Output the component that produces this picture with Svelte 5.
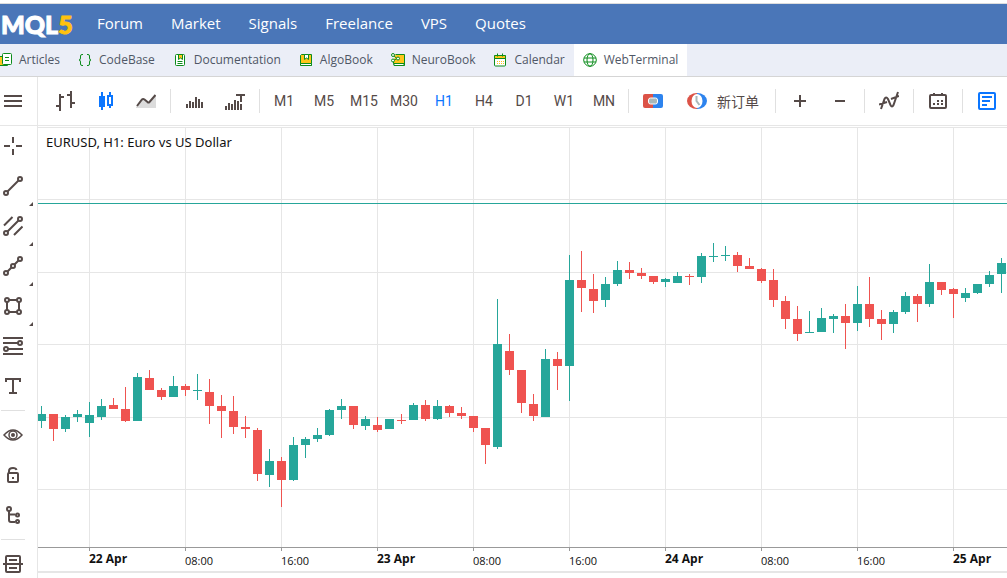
<script>
  const menu = ["Forum", "Market", "Signals", "Freelance", "VPS", "Quotes"];

  const sections = [
    { name: "Articles", icon: "articles" },
    { name: "CodeBase", icon: "code" },
    { name: "Documentation", icon: "docs" },
    { name: "AlgoBook", icon: "algo" },
    { name: "NeuroBook", icon: "neuro" },
    { name: "Calendar", icon: "calendar" },
    { name: "WebTerminal", icon: "globe" },
  ];

  const periods = ["M1", "M5", "M15", "M30", "H1", "H4", "D1", "W1", "MN"];
  let period = $state("H1");
  let section = $state("WebTerminal");

  const tools = [
    { name: "Crosshair", icon: "cross" },
    { name: "Trend line", icon: "line", more: true },
    { name: "Channel", icon: "channel", more: true },
    { name: "Polyline", icon: "poly", more: true },
    { name: "Shapes", icon: "shape", more: true },
    { name: "Fibonacci", icon: "fibo" },
    { name: "Text", icon: "text" },
    null,
    { name: "Show objects", icon: "eye" },
    { name: "Lock", icon: "lock" },
    { name: "Object tree", icon: "tree" },
    null,
    { name: "Panels", icon: "panels" },
  ];

  // chart geometry, all in px from the top left of the chart area
  const step = 12;
  const top = 126;
  const axisY = 421;
  const gridRows = [73, 146, 218, 291, 363];
  const priceY = 77;

  // high, body top, body bottom, low, up
  const candles = [
    [406, 414, 421, 428, 1], [414, 414, 429, 441, 0], [415, 417, 429, 432, 1],
    [410, 414, 417, 422, 1], [402, 415, 423, 437, 1], [399, 406, 417, 420, 1],
    [398, 405, 409, 409, 0], [387, 409, 421, 422, 0], [373, 377, 421, 421, 1],
    [370, 378, 390, 390, 0], [388, 390, 397, 400, 0], [376, 386, 397, 397, 1],
    [384, 386, 390, 396, 0], [374, 390, 391, 400, 1], [379, 392, 406, 424, 0],
    [395, 406, 411, 438, 0], [396, 411, 427, 434, 0], [416, 427, 429, 438, 0],
    [428, 430, 474, 481, 0], [449, 461, 475, 487, 1], [457, 461, 480, 507, 0],
    [437, 445, 480, 481, 1], [437, 439, 445, 458, 1], [428, 435, 439, 442, 1],
    [409, 410, 435, 436, 1], [399, 406, 410, 419, 1], [406, 406, 425, 429, 0],
    [416, 419, 426, 430, 1], [417, 425, 430, 432, 0], [419, 419, 429, 429, 1],
    [414, 420, 421, 424, 0], [403, 405, 420, 420, 1], [400, 405, 419, 421, 0],
    [400, 406, 419, 420, 1], [405, 406, 413, 417, 0], [407, 413, 416, 419, 0],
    [416, 416, 428, 432, 0], [428, 428, 445, 464, 0], [299, 344, 447, 449, 1],
    [334, 351, 370, 375, 0], [370, 370, 403, 413, 0], [394, 404, 416, 421, 0],
    [349, 359, 417, 417, 1], [352, 359, 366, 390, 0], [255, 280, 366, 401, 1],
    [251, 280, 288, 312, 0], [274, 289, 301, 313, 0], [277, 284, 300, 307, 1],
    [261, 270, 284, 286, 1], [262, 270, 273, 279, 0], [268, 273, 276, 279, 0],
    [276, 276, 282, 284, 0], [278, 279, 282, 287, 1], [272, 276, 283, 283, 1],
    [274, 276, 277, 285, 0], [253, 256, 277, 283, 1], [243, 256, 257, 262, 1],
    [246, 255, 256, 261, 1], [252, 255, 266, 272, 0], [258, 266, 269, 269, 0],
    [268, 269, 281, 283, 0], [269, 280, 300, 307, 0], [296, 301, 319, 329, 0],
    [306, 319, 334, 341, 0], [311, 332, 333, 333, 1], [308, 318, 332, 332, 1],
    [314, 316, 319, 333, 1], [304, 316, 323, 349, 0], [286, 304, 323, 331, 1],
    [277, 304, 319, 327, 0], [310, 319, 324, 340, 0], [310, 312, 324, 333, 1],
    [292, 296, 312, 314, 1], [294, 296, 304, 322, 0], [264, 282, 304, 307, 1],
    [282, 282, 290, 295, 0], [288, 289, 294, 318, 0], [288, 293, 298, 302, 1],
    [284, 284, 293, 294, 1], [271, 275, 284, 287, 1], [258, 263, 274, 293, 1],
  ];

  const labels = [
    "22 Apr", "08:00", "16:00",
    "23 Apr", "08:00", "16:00",
    "24 Apr", "08:00", "16:00",
    "25 Apr",
  ];

  const candleX = (i) => 3 + i * step;
  const labelX = (i) => 51 + i * step * 8;
</script>

{#snippet sectionIcon(icon)}
  <svg width="14" height="14" viewBox="0 0 14 14" fill="none" stroke="#0c8c1c" aria-hidden="true">
    {#if icon === "articles"}
      <path d="M4 3.5H1.500V12.500H9.500V11" fill="#ffc61a" stroke="#0c8c1c" />
      <rect x="4.500" y="0.500" width="9" height="11" rx="1" fill="#fff" />
      <path d="M7 4.500h4M7 7.500h4" />
    {:else if icon === "code"}
      <path d="M5 1.500H4Q2.500 1.500 2.500 3V5Q2.500 7 1 7Q2.500 7 2.500 9V11Q2.500 12.500 4 12.500H5M9 1.500h1Q11.500 1.500 11.500 3V5Q11.500 7 13 7Q11.500 7 11.500 9V11Q11.500 12.500 10 12.500H9" />
    {:else if icon === "docs"}
      <rect x="2.500" y="1.500" width="9" height="11" rx="1" fill="#fff" />
      <path d="M5.500 1.500v5l2-1.500 2 1.500v-5z" fill="#ffc61a" />
      <path d="M4.500 8.500h5M4.500 10.500h5" />
    {:else if icon === "algo"}
      <path d="M2.500 1.500h10v11h-10q-1 0-1-1.500V2.500z" fill="#ffc61a" />
      <path d="M1.500 10.500h11v2h-11z" fill="#fff" />
      <path d="M5.500 1.500v5l2-1.500 2 1.500v-5z" fill="#fff" />
    {:else if icon === "neuro"}
      <path d="M4.500 1.500h9v11h-10l-1-2v-2" fill="#ffc61a" />
      <path d="M3 10.500h10v2h-10z" fill="#fff" />
      <path d="M3 3l3 2.500L2.500 7.500" />
      <circle cx="2" cy="2" r="1.500" fill="#fff" />
      <circle cx="7" cy="5.500" r="1.500" fill="#fff" />
      <circle cx="2" cy="7.500" r="1.500" fill="#fff" />
    {:else if icon === "calendar"}
      <rect x="1.500" y="2.500" width="11" height="10.500" rx="1" fill="#fff" />
      <path d="M1.500 2.500h11v3h-11z" fill="#ffc61a" />
      <path d="M4.500 0.500v3M9.500 0.500v3" />
      <path d="M4 8.500h7M4 10.500h7" stroke="#ffc61a" stroke-dasharray="1 1" />
    {:else}
      <circle cx="7" cy="7" r="6.300" />
      <ellipse cx="7" cy="7" rx="3" ry="6.300" />
      <path d="M1 5h12M1 9h12" />
    {/if}
  </svg>
{/snippet}

{#snippet toolIcon(icon)}
  <svg width="20" height="20" viewBox="0 0 20 20" fill="none" stroke="currentColor" stroke-width="2" aria-hidden="true">
    {#if icon === "cross"}
      <path d="M10 1v6M10 13v6M1 10h6M13 10h6" />
    {:else if icon === "line"}
      <path d="M4.500 15.500L15.500 4.500" />
      <circle cx="3" cy="17" r="2" />
      <circle cx="17" cy="3" r="2" />
    {:else if icon === "channel"}
      <path d="M4.500 15.500L15.500 4.500M1 9.500L9.500 1M11 19L19.500 10.500" />
      <circle cx="3" cy="17" r="2" />
      <circle cx="17" cy="3" r="2" />
    {:else if icon === "poly"}
      <path d="M4.500 15.500l4-4M11.500 8.500l4-4" />
      <circle cx="3" cy="17" r="2" />
      <circle cx="10" cy="10" r="2" />
      <circle cx="17" cy="3" r="2" />
    {:else if icon === "shape"}
      <path d="M6 4h8M6 16h8M4 6v8M16 6v8" />
      <circle cx="4" cy="4" r="2" />
      <circle cx="16" cy="4" r="2" />
      <circle cx="4" cy="16" r="2" />
      <circle cx="16" cy="16" r="2" />
    {:else if icon === "fibo"}
      <path d="M0 2h20M0 7h15M5 13h15M0 18h20" />
      <circle cx="17" cy="7" r="2" />
      <circle cx="3" cy="13" r="2" />
    {:else if icon === "text"}
      <path d="M3 6V3h14v3M10 3v14M6 17h8" />
    {:else if icon === "eye"}
      <path d="M1 10Q10 0 19 10Q10 20 1 10z" stroke-width="1.500" />
      <circle cx="10" cy="10" r="4" stroke-width="1.500" />
      <circle cx="10" cy="10" r="2" fill="currentColor" stroke="none" />
    {:else if icon === "lock"}
      <rect x="5" y="8" width="10" height="9" rx="1" />
      <path d="M6 8V6q0-3 4-3 3 0 3.500 2" />
      <path d="M9 12h2v2H9z" fill="currentColor" stroke="none" />
    {:else if icon === "tree"}
      <path d="M6 6v9q0 2 2 2h4M6 9.500h6" />
      <circle cx="6" cy="4" r="2" />
      <circle cx="14.500" cy="10" r="1.500" />
      <circle cx="14.500" cy="16.500" r="1.500" />
    {:else if icon === "panels"}
      <path d="M3 10V3q0-1 1-1h12q1 0 1 1v7M3 10v7q0 1 1 1h12q1 0 1-1v-7M0 10h20M6 6h8M6 14h8" />
    {/if}
  </svg>
{/snippet}

<div class="page">
  <header>
    <a class="logo" href="/">MQL<span>5</span></a>
    <nav>
      {#each menu as item}
        <a href="/{item.toLowerCase()}">{item}</a>
      {/each}
    </nav>
  </header>

  <nav class="sections">
    {#each sections as s}
      <a href="/{s.name.toLowerCase()}" class:active={s.name === section}>
        {@render sectionIcon(s.icon)}<span>{s.name}</span>
      </a>
    {/each}
  </nav>

  <div class="toolbar">
    <button class="burger" aria-label="Menu">
      <svg width="18" height="14" viewBox="0 0 18 14" stroke="currentColor" stroke-width="2"><path d="M0 2h18M0 7h18M0 12h18" /></svg>
    </button>
    <button class="first" aria-label="Bars">
      <svg width="20" height="20" viewBox="0 0 20 20" fill="none" stroke="currentColor" stroke-width="2"><path d="M4 3v18M0 15h4M4 6h4M15 0v17M11 4h4M15 12h4" /></svg>
    </button>
    <button class="on" aria-label="Candles">
      <svg width="20" height="20" viewBox="0 0 20 20" fill="none" stroke="currentColor" stroke-width="2"><path d="M6 1v18M14 1v3M14 14v3" /><path d="M3 5h6v11H3z" fill="currentColor" stroke="none" /><path d="M12 5h4v9h-4z" /></svg>
    </button>
    <button aria-label="Line">
      <svg width="20" height="20" viewBox="0 0 20 20" fill="none" stroke="currentColor" stroke-width="2"><path d="M0 16L7 8l5 4 8-8v13H0z" fill="#dcdcdc" stroke="none" /><path d="M1 15L6 8.500q1-1 2.500 0l3 2.500q1 1 2 0l6-7" /></svg>
    </button>
    <i></i>
    <button aria-label="Tick volume">
      <svg width="20" height="20" viewBox="0 0 20 20" stroke="currentColor" stroke-width="2"><path d="M2 13v4M5 10v7M8 11v6M11 6v11M14 8v9M17 11v6" /></svg>
    </button>
    <button aria-label="Real volume">
      <svg width="20" height="20" viewBox="0 0 20 20" fill="none" stroke="currentColor" stroke-width="2"><path d="M1 15v4M4 12v7M7 13v6M10 9v10M13 10v9M16 13v6M12 5V4h7v1M16 4v7" /></svg>
    </button>
    <i></i>
    {#each periods as p}
      <button class:on={p === period} onclick={() => (period = p)}>{p}</button>
    {/each}
    <i></i>
    <button aria-label="One click trading">
      <svg width="20" height="20" viewBox="0 0 20 20"><path d="M2 3h8v14H2q-2 0-2-2V5q0-2 2-2z" fill="#dc5347" /><path d="M10 3h8q2 0 2 2v10q0 2-2 2h-8z" fill="#2d83ee" /><rect x="5.500" y="7" width="9" height="6" rx="2" fill="#a9b8ba" stroke="#fff" /></svg>
    </button>
    <button class="order">
      <svg width="20" height="20" viewBox="0 0 20 20" fill="none"><path d="M10 2A10 8 0 0 0 10 18z" fill="#dc5347" /><path d="M10 2A10 8 0 0 1 10 18z" fill="#2d83ee" /><ellipse cx="10" cy="10" rx="5.500" ry="7" fill="#fff" /><path d="M9.500 5v5l3 4" stroke="#a9b8ba" stroke-width="2" /></svg>
      新订单
    </button>
    <i></i>
    <button aria-label="Zoom in">
      <svg width="20" height="20" viewBox="0 0 20 20" stroke="currentColor" stroke-width="2"><path d="M4 10h12M10 4v12" /></svg>
    </button>
    <button aria-label="Zoom out">
      <svg width="20" height="20" viewBox="0 0 20 20" stroke="currentColor" stroke-width="2"><path d="M5 10h10" /></svg>
    </button>
    <i></i>
    <button aria-label="Indicators">
      <svg width="20" height="20" viewBox="0 0 20 20" fill="none" stroke="currentColor" stroke-width="2"><path d="M2 18L5.500 8q1.500-3 3.500 0l2.500 6q1.500 3 3 0L19 1M0 13.500l8-2.500M12 8l8-3" /></svg>
    </button>
    <i></i>
    <button aria-label="Calendar">
      <svg width="20" height="20" viewBox="0 0 20 20" fill="none" stroke="currentColor" stroke-width="2"><rect x="2" y="4" width="16" height="13" rx="1" /><path d="M6 2v3M14 2v3" /><path d="M9 10h6M5 13h10" stroke-dasharray="2 2" /></svg>
    </button>
    <i></i>
    <button class="on" aria-label="Market watch">
      <svg width="20" height="20" viewBox="0 0 20 20" fill="none" stroke="currentColor" stroke-width="2"><rect x="2" y="2" width="16" height="16" rx="1" /><path d="M5 6h10M5 10h8M5 14h5" /></svg>
    </button>
  </div>

  <main>
    <aside>
      {#each tools as tool}
        {#if tool}
          <button class:more={tool.more} aria-label={tool.name}>{@render toolIcon(tool.icon)}</button>
        {:else}
          <hr />
        {/if}
      {/each}
    </aside>

    <div class="chart">
      <svg class="plot" width="100%" height="447" shape-rendering="crispEdges" role="img" aria-label="EURUSD, H1">
        <rect x="0" y="1" width="100%" height="1" fill="#e6e6e6" />
        {#each gridRows as y}
          <rect x="0" {y} width="100%" height="1" fill="#e6e6e6" />
        {/each}
        {#each labels as label, i}
          <rect x={labelX(i)} y="1" width="1" height={axisY - 1} fill="#e6e6e6" />
          <rect x={labelX(i)} y={axisY} width="1" height="4" fill="#999" />
        {/each}
        <rect x="0" y={priceY} width="100%" height="1" fill="#26a69a" />
        {#each candles as [high, a, b, low, up], i}
          <g fill={up ? "#26a69a" : "#ef5350"}>
            <rect x={candleX(i)} y={high - top} width="1" height={low - high} />
            <rect x={candleX(i) - 4} y={a - top} width="9" height={b - a} />
          </g>
        {/each}
        <rect x="0" y={axisY} width="100%" height="1" fill="#999" />
        {#each labels as label, i}
          <text
            class:day={label.includes("Apr")}
            x={labelX(i)}
            y={label.includes("Apr") ? 437 : 439}>{label}</text
          >
        {/each}
        <rect x="0" y="445" width="100%" height="2" fill="#e6e6e6" />
      </svg>
      <div class="title">EURUSD, H1: Euro vs US Dollar</div>
    </div>
  </main>
</div>

<style>
  :global(body) {
    margin: 0;
    background: #fff;
  }

  .page {
    height: 100vh;
    overflow: hidden;
    display: flex;
    flex-direction: column;
    box-sizing: border-box;
    padding-top: 3px;
    font-family: "Open Sans", "Noto Sans CJK SC", sans-serif;
    color: #554a48;
  }

  a {
    text-decoration: none;
  }

  header {
    display: flex;
    align-items: center;
    flex: none;
    height: 40px;
    border-top: 1px solid #ddd;
    background: #4a76b8;
  }

  .logo {
    width: 97px;
    box-sizing: border-box;
    padding-left: 1px;
    font-family: Lato, sans-serif;
    font-size: 25px;
    font-weight: 900;
    line-height: 40px;
    color: #fff;
    -webkit-text-stroke: 1px currentColor;
  }

  .logo span {
    color: #ffc20e;
  }

  header nav {
    display: flex;
    gap: 28px;
    padding-bottom: 2px;
  }

  header nav a {
    color: #fff;
    font-size: 15px;
    font-weight: 500;
  }

  .sections {
    display: flex;
    flex: none;
    height: 32px;
    border-bottom: 1px solid #d5d5d5;
    background: #ebeef7;
  }

  .sections a {
    display: flex;
    align-items: center;
    gap: 7px;
    padding: 0 9px;
    font-size: 12px;
    color: #4f5766;
  }

  .sections a:first-child {
    margin-left: -2px;
    padding-left: 0;
  }

  .sections a.active {
    background: #fff;
  }

  .sections span {
    padding-bottom: 1px;
  }

  .sections svg {
    flex: none;
  }

  .toolbar {
    display: flex;
    align-items: center;
    flex: none;
    height: 48px;
    border-bottom: 1px solid #e6e6e6;
  }

  button {
    display: flex;
    align-items: center;
    justify-content: center;
    flex: none;
    width: 40px;
    height: 40px;
    padding: 0;
    border: 0;
    background: none;
    color: #554a48;
    font-family: Roboto, "Noto Sans CJK SC", sans-serif;
    font-size: 14px;
    cursor: pointer;
  }

  button.on {
    color: #0b76ff;
  }

  .toolbar .burger {
    box-sizing: content-box;
    width: 26px;
    height: 48px;
    padding-right: 11px;
    border-right: 1px solid #e6e6e6;
  }

  .toolbar .first {
    margin-left: 8px;
  }

  .toolbar i {
    flex: none;
    width: 1px;
    height: 24px;
    margin: 0 4px;
    background: #e0e0e0;
  }

  .toolbar .order {
    width: auto;
    gap: 10px;
    padding: 0 12px 0 14px;
  }

  main {
    display: flex;
    flex: 1;
    min-height: 0;
  }

  aside {
    flex: none;
    width: 37px;
    border-right: 1px solid #e6e6e6;
  }

  aside button {
    position: relative;
    width: 26px;
  }

  aside .more::after {
    content: "";
    position: absolute;
    right: -7px;
    bottom: 0;
    border-left: 4px solid transparent;
    border-bottom: 4px solid #554a48;
  }

  hr {
    width: 24px;
    height: 1px;
    margin: 4px 1px;
    border: 0;
    background: #e0e0e0;
  }

  .chart {
    position: relative;
    flex: 1;
    min-width: 0;
  }

  .plot {
    display: block;
  }

  .title {
    position: absolute;
    top: 7px;
    left: 8px;
    font-family: "Noto Sans", sans-serif;
    font-size: 13px;
    line-height: 18px;
    color: #111;
  }

  text {
    font-size: 11px;
    fill: #111;
  }

  text.day {
    font-size: 12px;
    font-weight: 700;
  }
</style>
